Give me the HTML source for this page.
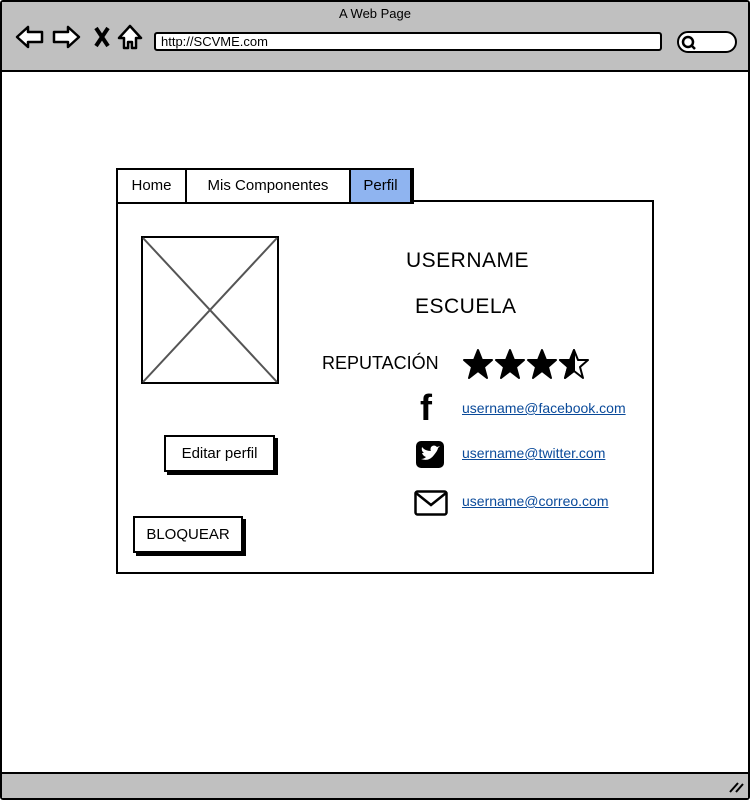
<!DOCTYPE html>
<html><head><meta charset="utf-8"><style>
*{margin:0;padding:0;box-sizing:border-box}
body{width:750px;height:800px;position:relative;background:#fff;font-family:"Liberation Sans",sans-serif;overflow:hidden}
.a{position:absolute}
.frame{left:0;top:0;width:750px;height:800px;border:2px solid #000;border-radius:3px}
.top{left:2px;top:2px;width:746px;height:70px;background:#c0c0c0;border-bottom:2px solid #000}
.bot{left:2px;top:772px;width:746px;height:26px;background:#c0c0c0;border-top:2px solid #000}
.url{left:154px;top:32px;width:508px;height:19px;background:#fff;border:2px solid #000;border-radius:3px;font-size:13px;padding-left:5px;line-height:15px}
.srch{left:677px;top:31px;width:60px;height:22px;background:#fff;border:2px solid #000;border-radius:11px}
.tab{top:168px;height:36px;border:2px solid #000;font-size:15px;line-height:32px;text-align:center;background:#fff}
.panel{left:116px;top:200px;width:538px;height:374px;border:2px solid #000}
.btn{background:#fff;border:2px solid #000;box-shadow:3px 3px 0 #000;font-size:15px;text-align:center}
.lnk{left:462px;font-size:14px;color:#0a4a9a;text-decoration:underline}
.t{font-size:21px;letter-spacing:.5px}
</style></head><body>
<div class="a frame"></div>
<div class="a top"></div>
<div class="a" style="left:0;top:6px;width:750px;text-align:center;font-size:13px">A Web Page</div>
<svg class="a" style="left:14px;top:24px" width="132" height="28" viewBox="0 0 132 28" fill="#fff" stroke="#000" stroke-width="2.5" stroke-linejoin="round">
<path d="M3 13 L14 3 L14 8 L28 8 L28 18 L14 18 L14 23 Z"/>
<path d="M65 13 L54 3 L54 8 L40 8 L40 18 L54 18 L54 23 Z"/>
<path d="M82 4 L94 22 M94 4 L82 22" stroke-width="4"/>
<path d="M105 14 L116 2 L127 14 L122 14 L122 24 L118 24 L118 18 L114 18 L114 24 L110 24 L110 14 Z"/>
</svg>
<div class="a url">http://SCVME.com</div>
<div class="a srch"></div>
<svg class="a" style="left:681px;top:35px" width="16" height="16"><circle cx="7" cy="7" r="5" fill="none" stroke="#000" stroke-width="2.5"/><path d="M10 10 L14 14" stroke="#000" stroke-width="2.5"/></svg>
<div class="a bot"></div>
<svg class="a" style="left:728px;top:780px" width="16" height="14"><path d="M2 12 L10 3 M8 12 L15 4" stroke="#000" stroke-width="2"/></svg>

<div class="a panel"></div>
<div class="a tab" style="left:116px;width:71px">Home</div>
<div class="a tab" style="left:185px;width:166px">Mis Componentes</div>
<div class="a tab" style="left:349px;width:63px;background:#8fb4f0;box-shadow:2px 0 0 #000">Perfil</div>

<svg class="a" style="left:141px;top:236px" width="138" height="148"><rect x="1" y="1" width="136" height="146" fill="#fff" stroke="#000" stroke-width="2"/><path d="M2 2 L136 146 M136 2 L2 146" stroke="#555" stroke-width="2"/></svg>

<div class="a btn" style="left:164px;top:435px;width:111px;height:37px;line-height:33px">Editar perfil</div>
<div class="a btn" style="left:133px;top:516px;width:110px;height:37px;line-height:33px">BLOQUEAR</div>

<div class="a t" style="left:406px;top:249px">USERNAME</div>
<div class="a t" style="left:415px;top:295px">ESCUELA</div>
<div class="a" style="left:322px;top:353px;font-size:18px">REPUTACIÓN</div>
<svg class="a" style="left:462px;top:348px" width="130" height="32" viewBox="0 0 130 32">
<g stroke="#000" stroke-width="2" stroke-linejoin="round">
<path d="M16 2 L20 12 L30 12 L22 19 L25 30 L16 23 L7 30 L10 19 L2 12 L12 12 Z"/>
<path transform="translate(32 0)" d="M16 2 L20 12 L30 12 L22 19 L25 30 L16 23 L7 30 L10 19 L2 12 L12 12 Z"/>
<path transform="translate(64 0)" d="M16 2 L20 12 L30 12 L22 19 L25 30 L16 23 L7 30 L10 19 L2 12 L12 12 Z"/>
<path transform="translate(96 0)" d="M16 2 L20 12 L30 12 L22 19 L25 30 L16 23 L7 30 L10 19 L2 12 L12 12 Z" fill="#fff"/>
<path transform="translate(96 0)" d="M16 2 L12 12 L2 12 L10 19 L7 30 L16 23 Z"/>
</g></svg>
<div class="a" style="left:420px;top:392px;font-size:36px;font-weight:bold;line-height:32px">f</div>
<svg class="a" style="left:415px;top:440px" width="30" height="29"><rect x="1" y="1" width="28" height="27" rx="5" fill="#000"/><path d="M6 19 Q14 22 19 15 Q23 10 23 8 L25 6 L22 7 Q19 4 16 7 Q15 10 16 11 Q10 11 7 7 Q6 11 9 13 L7 13 Q8 16 11 17 Q9 19 6 19Z" fill="#fff"/></svg>
<svg class="a" style="left:414px;top:490px" width="34" height="26"><rect x="1.5" y="1.5" width="31" height="23" rx="2" fill="#fff" stroke="#000" stroke-width="2.5"/><path d="M2 3 L17 15 L32 3" fill="none" stroke="#000" stroke-width="2.5"/></svg>
<div class="a lnk" style="top:400px">username@facebook.com</div>
<div class="a lnk" style="top:445px">username@twitter.com</div>
<div class="a lnk" style="top:493px">username@correo.com</div>
</body></html>
